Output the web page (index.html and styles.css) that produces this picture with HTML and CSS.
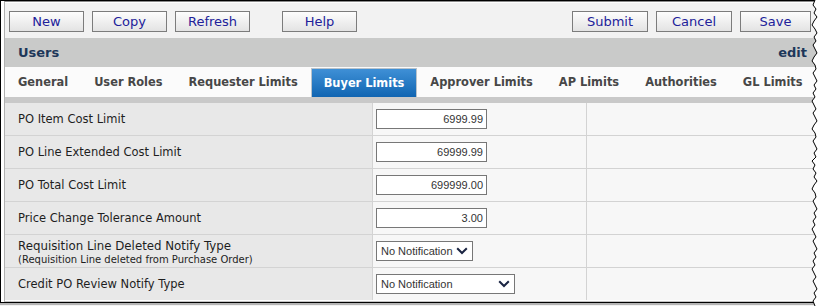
FILE: index.html
```html
<!DOCTYPE html>
<html>
<head>
<meta charset="utf-8">
<link rel="stylesheet" href="styles.css">
</head>
<body>
<div class="shot">
  <div class="frame">
    <div class="app">
      <div class="toolbar">
        <button class="btn">New</button>
        <button class="btn">Copy</button>
        <button class="btn">Refresh</button>
        <button class="btn btn-help">Help</button>
        <button class="btn btn-submit">Submit</button>
        <button class="btn btn-cancel">Cancel</button>
        <button class="btn btn-save">Save</button>
      </div>
      <div class="header">
        <span class="title">Users</span>
        <span class="mode">edit</span>
      </div>
      <div class="tabs">
        <span class="tab">General</span>
        <span class="tab">User Roles</span>
        <span class="tab">Requester Limits</span>
        <span class="tab active">Buyer Limits</span>
        <span class="tab">Approver Limits</span>
        <span class="tab">AP Limits</span>
        <span class="tab">Authorities</span>
        <span class="tab">GL Limits</span>
      </div>
      <div class="band"></div>
      <div class="grid">
        <div class="row">
          <div class="cell label">PO Item Cost Limit</div>
          <div class="cell value"><div class="input">6999.99</div></div>
          <div class="cell rest"></div>
        </div>
        <div class="row">
          <div class="cell label">PO Line Extended Cost Limit</div>
          <div class="cell value"><div class="input">69999.99</div></div>
          <div class="cell rest"></div>
        </div>
        <div class="row">
          <div class="cell label">PO Total Cost Limit</div>
          <div class="cell value"><div class="input">699999.00</div></div>
          <div class="cell rest"></div>
        </div>
        <div class="row">
          <div class="cell label">Price Change Tolerance Amount</div>
          <div class="cell value"><div class="input">3.00</div></div>
          <div class="cell rest"></div>
        </div>
        <div class="row">
          <div class="cell label label-two">
            <span class="main">Requisition Line Deleted Notify Type</span>
            <span class="sub">(Requisition Line deleted from Purchase Order)</span>
          </div>
          <div class="cell value">
            <div class="select select-short"><span>No Notification</span><svg class="chev" width="12" height="8" viewBox="0 0 12 8"><path d="M1.2 1.2 L6 6 L10.8 1.2" fill="none" stroke="#1b2543" stroke-width="2"/></svg></div>
          </div>
          <div class="cell rest"></div>
        </div>
        <div class="row last">
          <div class="cell label">Credit PO Review Notify Type</div>
          <div class="cell value">
            <div class="select select-long"><span>No Notification</span><svg class="chev" width="12" height="8" viewBox="0 0 12 8"><path d="M1.2 1.2 L6 6 L10.8 1.2" fill="none" stroke="#1b2543" stroke-width="2"/></svg></div>
          </div>
          <div class="cell rest"></div>
        </div>
      </div>
    </div>
  </div>
  <svg class="tear" width="20" height="306" viewBox="806 0 20 306">
    <polygon fill="#ffffff" points="815,0 813,5 816,9 814,13 817,17 814,21 812,25 815,29 817,33 814,37 816,41 813,45 815,49 817,53 814,57 812,61 815,65 816,69 813,73 815,77 817,81 814,85 816,89 813,93 815,97 812,101 814,105 816,109 813,113 815,117 817,121 814,125 812,129 815,133 816,137 813,141 815,145 817,149 814,153 816,157 812,161 815,165 813,169 816,173 814,177 817,181 814,185 812,189 815,193 816,197 813,201 815,205 817,209 814,213 816,217 813,221 815,225 812,229 814,233 816,237 813,241 815,245 817,249 814,253 816,257 813,261 815,265 812,269 814,273 816,277 813,281 815,285 817,289 814,293 816,297 813,301 815,306 826,306 826,0"/>
    <polyline fill="none" stroke="#000000" stroke-width="1" points="815,0 813,5 816,9 814,13 817,17 814,21 812,25 815,29 817,33 814,37 816,41 813,45 815,49 817,53 814,57 812,61 815,65 816,69 813,73 815,77 817,81 814,85 816,89 813,93 815,97 812,101 814,105 816,109 813,113 815,117 817,121 814,125 812,129 815,133 816,137 813,141 815,145 817,149 814,153 816,157 812,161 815,165 813,169 816,173 814,177 817,181 814,185 812,189 815,193 816,197 813,201 815,205 817,209 814,213 816,217 813,221 815,225 812,229 814,233 816,237 813,241 815,245 817,249 814,253 816,257 813,261 815,265 812,269 814,273 816,277 813,281 815,285 817,289 814,293 816,297 813,301 815,306"/>
  </svg>
</div>
</body>
</html>
```

FILE: styles.css
```css
html, body {
  margin: 0;
  padding: 0;
  background: #ffffff;
  overflow: hidden;
}

.shot {
  position: relative;
  width: 823px;
  height: 306px;
}

.frame {
  box-sizing: border-box;
  width: 823px;
  height: 303px;
  border-top: 1px solid #000;
  border-left: 1px solid #000;
  border-bottom: 1px solid #000;
  padding: 0 0 1px 3px;
  overflow: hidden;
  background: #ffffff;
  box-shadow: 0 2px 1px #b4b4b4;
}

.app {
  box-sizing: border-box;
  width: 816px;
  height: 301px;
  border: 1px solid #8a8a8a;
  border-bottom-color: #c4c4c4;
  border-left-color: #b0b0b0;
  display: flex;
  flex-direction: column;
  font-family: "DejaVu Sans", Verdana, sans-serif;
}

/* toolbar */
.toolbar {
  box-sizing: border-box;
  height: 36px;
  border-top: 1px solid #ffffff;
  background: #f2f2f2;
  display: flex;
  align-items: flex-start;
  gap: 8px;
  padding: 8px 8px 0 4px;
}

.btn {
  box-sizing: border-box;
  width: 75px;
  height: 21px;
  margin: 0;
  padding: 0;
  border: 1px solid #7c7c7c;
  border-radius: 0;
  background: linear-gradient(#fdfdfd, #e3e3e3);
  font-family: "DejaVu Sans", Verdana, sans-serif;
  font-size: 13px;
  line-height: 19px;
  color: #21219a;
  text-align: center;
}

.btn-help { margin-left: 24px; }
.btn-submit { margin-left: auto; width: 76px; }
.btn-cancel { width: 76px; }
.btn-save { width: 71px; }

/* header */
.header {
  box-sizing: border-box;
  height: 29px;
  background: #c9cac9;
  display: flex;
  align-items: center;
  justify-content: space-between;
  padding: 0 12px 0 13px;
  font-weight: bold;
  font-size: 13px;
  color: #1d3759;
}

/* tabs */
.tabs {
  box-sizing: border-box;
  height: 30px;
  background: #fbfbfb;
  display: flex;
  align-items: stretch;
  padding-top: 1px;
}

.tab {
  box-sizing: border-box;
  display: flex;
  align-items: center;
  padding: 0 13px 1px 13px;
  font-size: 11.4px;
  font-weight: bold;
  color: #474747;
  white-space: nowrap;
}

.tab.active {
  color: #ffffff;
  background: linear-gradient(#3f90d6, #1065b2);
  border: 1px solid #b9c3cb;
  border-bottom: none;
  padding: 0 12px 0 12px;
}

.band {
  height: 6px;
  background: #c9c9c9;
}

/* grid */
.grid {
  display: flex;
  flex-direction: column;
}

.row {
  box-sizing: border-box;
  height: 33px;
  display: flex;
  border-bottom: 1px solid #d3d3d3;
}

.row.last {
  border-bottom: none;
  height: 32px;
}

.cell {
  box-sizing: border-box;
  display: flex;
  align-items: center;
}

.label {
  width: 368px;
  background: #e8e8e8;
  border-right: 1px solid #d3d3d3;
  padding-left: 13px;
  font-size: 11.5px;
  color: #1e1e1e;
}

.label-two {
  flex-direction: column;
  align-items: flex-start;
  justify-content: center;
  gap: 1px;
  padding-top: 1px;
}

.label-two .main {
  font-size: 11.8px;
}

.label-two .sub {
  font-size: 10px;
}

.value {
  width: 214px;
  background: #f7f7f7;
  border-right: 1px solid #d3d3d3;
  padding-left: 3px;
}

.rest {
  flex: 1;
  background: #f7f7f7;
}

.input {
  box-sizing: border-box;
  width: 111px;
  height: 20px;
  border: 1px solid #777777;
  background: #ffffff;
  font-family: "Liberation Sans", Arial, sans-serif;
  font-size: 11px;
  line-height: 18px;
  color: #333333;
  text-align: right;
  padding-right: 3px;
}

.select {
  box-sizing: border-box;
  height: 20px;
  border: 1px solid #777777;
  background: #ffffff;
  font-family: "Liberation Sans", Arial, sans-serif;
  font-size: 11px;
  color: #333333;
  display: flex;
  align-items: center;
  justify-content: space-between;
  padding: 0 4px 0 4px;
}

.select-short { width: 97px; }
.select-long { width: 139px; }

.chev { display: block; }

/* torn edge overlay */
.tear {
  position: absolute;
  top: 0;
  left: 806px;
}
```
